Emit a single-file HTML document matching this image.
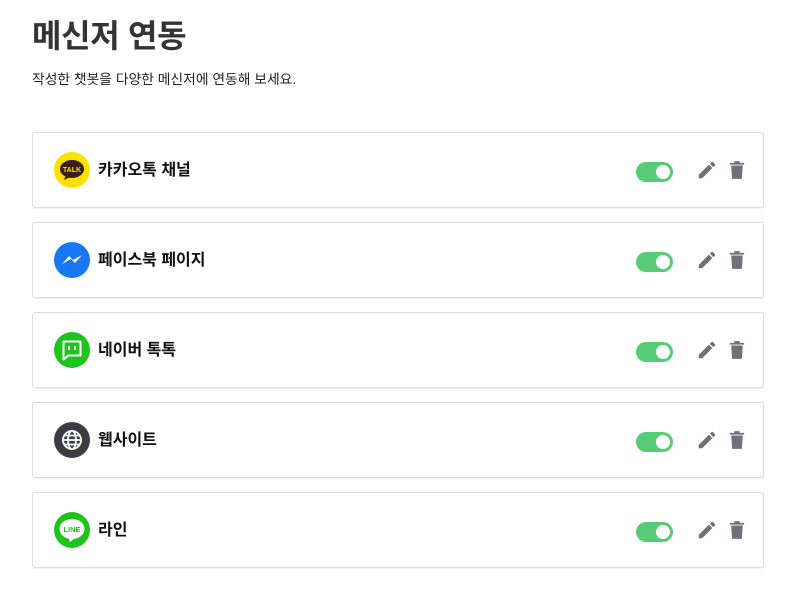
<!DOCTYPE html>
<html><head><meta charset="utf-8"><style>
body{margin:0;background:#fff;font-family:"Liberation Sans","Noto Sans CJK KR",sans-serif;color:#333;width:803px;height:610px;overflow:hidden}
h1{position:absolute;left:32px;top:14px;margin:0;font-size:32px;font-weight:bold;color:#333;line-height:44px;letter-spacing:-0.3px}
.sub{position:absolute;left:32px;top:70px;font-size:13.8px;color:#222;line-height:20px}
.card{position:absolute;left:32px;width:730px;height:74px;border:1px solid #ddd;border-radius:3px;box-shadow:0 1px 1px rgba(0,0,0,.05)}
.ic{position:absolute;left:21px;top:19px;width:36px;height:36px}
.nm{position:absolute;left:65px;top:27px;font-size:16px;font-weight:bold;color:#111;line-height:22px}
.tg{position:absolute;left:603px;top:29px;width:37px;height:20px;border-radius:10px;background:#55cc75}
.tg:after{content:"";position:absolute;right:3px;top:3px;width:14px;height:14px;border-radius:50%;background:#fff}
.pe{position:absolute;left:663px;top:26px}
.tr{position:absolute;left:696px;top:27px}
</style></head><body>
<h1>메신저 연동</h1>
<div class="sub">작성한 챗봇을 다양한 메신저에 연동해 보세요.</div>

<div class="card" style="top:132px">
<svg class="ic" viewBox="0 0 36 36"><circle cx="18" cy="18" r="18" fill="#fae100"/><ellipse cx="18" cy="17" rx="12" ry="9" fill="#3a1d1d"/><path d="M12 23 L10 28 L16 25z" fill="#3a1d1d"/><text x="18" y="20" font-size="7" font-weight="bold" fill="#fae100" text-anchor="middle" font-family="Liberation Sans">TALK</text></svg>
<div class="nm">카카오톡 채널</div><div class="tg"></div>
<svg class="pe" width="22" height="22" viewBox="0 0 24 24"><path d="M3 17.25V21h3.75L17.8 9.94l-3.75-3.75zM20.7 7.04a1 1 0 000-1.41l-2.34-2.34a1 1 0 00-1.41 0l-1.83 1.83 3.75 3.75z" fill="#6c717a"/></svg>
<svg class="tr" width="16" height="20" viewBox="0 0 18 22"><path d="M1 3h16v2H1zM6 1h6v2H6zM2.5 6h13l-1 15h-11z" fill="#6c717a"/></svg>
</div>

<div class="card" style="top:222px">
<svg class="ic" viewBox="0 0 36 36"><circle cx="18" cy="18" r="18" fill="#1877f2"/><path d="M8 22 L15 14 L19 18 L28 13 L21 21 L17 17z" fill="#fff"/></svg>
<div class="nm">페이스북 페이지</div><div class="tg"></div>
<svg class="pe" width="22" height="22" viewBox="0 0 24 24"><path d="M3 17.25V21h3.75L17.8 9.94l-3.75-3.75zM20.7 7.04a1 1 0 000-1.41l-2.34-2.34a1 1 0 00-1.41 0l-1.83 1.83 3.75 3.75z" fill="#6c717a"/></svg>
<svg class="tr" width="16" height="20" viewBox="0 0 18 22"><path d="M1 3h16v2H1zM6 1h6v2H6zM2.5 6h13l-1 15h-11z" fill="#6c717a"/></svg>
</div>

<div class="card" style="top:312px">
<svg class="ic" viewBox="0 0 36 36"><circle cx="18" cy="18" r="18" fill="#1ec31e"/><path d="M9.5 9.5h17v14h-12l-5 4z" fill="none" stroke="#fff" stroke-width="2" stroke-linejoin="round"/><rect x="14" y="14" width="2" height="4" fill="#fff"/><rect x="20" y="14" width="2" height="4" fill="#fff"/></svg>
<div class="nm">네이버 톡톡</div><div class="tg"></div>
<svg class="pe" width="22" height="22" viewBox="0 0 24 24"><path d="M3 17.25V21h3.75L17.8 9.94l-3.75-3.75zM20.7 7.04a1 1 0 000-1.41l-2.34-2.34a1 1 0 00-1.41 0l-1.83 1.83 3.75 3.75z" fill="#6c717a"/></svg>
<svg class="tr" width="16" height="20" viewBox="0 0 18 22"><path d="M1 3h16v2H1zM6 1h6v2H6zM2.5 6h13l-1 15h-11z" fill="#6c717a"/></svg>
</div>

<div class="card" style="top:402px">
<svg class="ic" viewBox="0 0 36 36"><circle cx="18" cy="18" r="18" fill="#3a3d44"/><g fill="none" stroke="#fff" stroke-width="1.8"><circle cx="18" cy="18" r="9"/><ellipse cx="18" cy="18" rx="4" ry="9"/><path d="M9 18h18M10.5 13.5h15M10.5 22.5h15"/></g></svg>
<div class="nm">웹사이트</div><div class="tg"></div>
<svg class="pe" width="22" height="22" viewBox="0 0 24 24"><path d="M3 17.25V21h3.75L17.8 9.94l-3.75-3.75zM20.7 7.04a1 1 0 000-1.41l-2.34-2.34a1 1 0 00-1.41 0l-1.83 1.83 3.75 3.75z" fill="#6c717a"/></svg>
<svg class="tr" width="16" height="20" viewBox="0 0 18 22"><path d="M1 3h16v2H1zM6 1h6v2H6zM2.5 6h13l-1 15h-11z" fill="#6c717a"/></svg>
</div>

<div class="card" style="top:492px">
<svg class="ic" viewBox="0 0 36 36"><circle cx="18" cy="18" r="18" fill="#1ec31e"/><ellipse cx="18" cy="17" rx="12.5" ry="10" fill="#fff"/><path d="M14 25 L16 30 L21 26z" fill="#fff"/><text x="18" y="20" font-size="7.5" font-weight="bold" fill="#1ec31e" text-anchor="middle" font-family="Liberation Sans">LINE</text></svg>
<div class="nm">라인</div><div class="tg"></div>
<svg class="pe" width="22" height="22" viewBox="0 0 24 24"><path d="M3 17.25V21h3.75L17.8 9.94l-3.75-3.75zM20.7 7.04a1 1 0 000-1.41l-2.34-2.34a1 1 0 00-1.41 0l-1.83 1.83 3.75 3.75z" fill="#6c717a"/></svg>
<svg class="tr" width="16" height="20" viewBox="0 0 18 22"><path d="M1 3h16v2H1zM6 1h6v2H6zM2.5 6h13l-1 15h-11z" fill="#6c717a"/></svg>
</div>
</body></html>
